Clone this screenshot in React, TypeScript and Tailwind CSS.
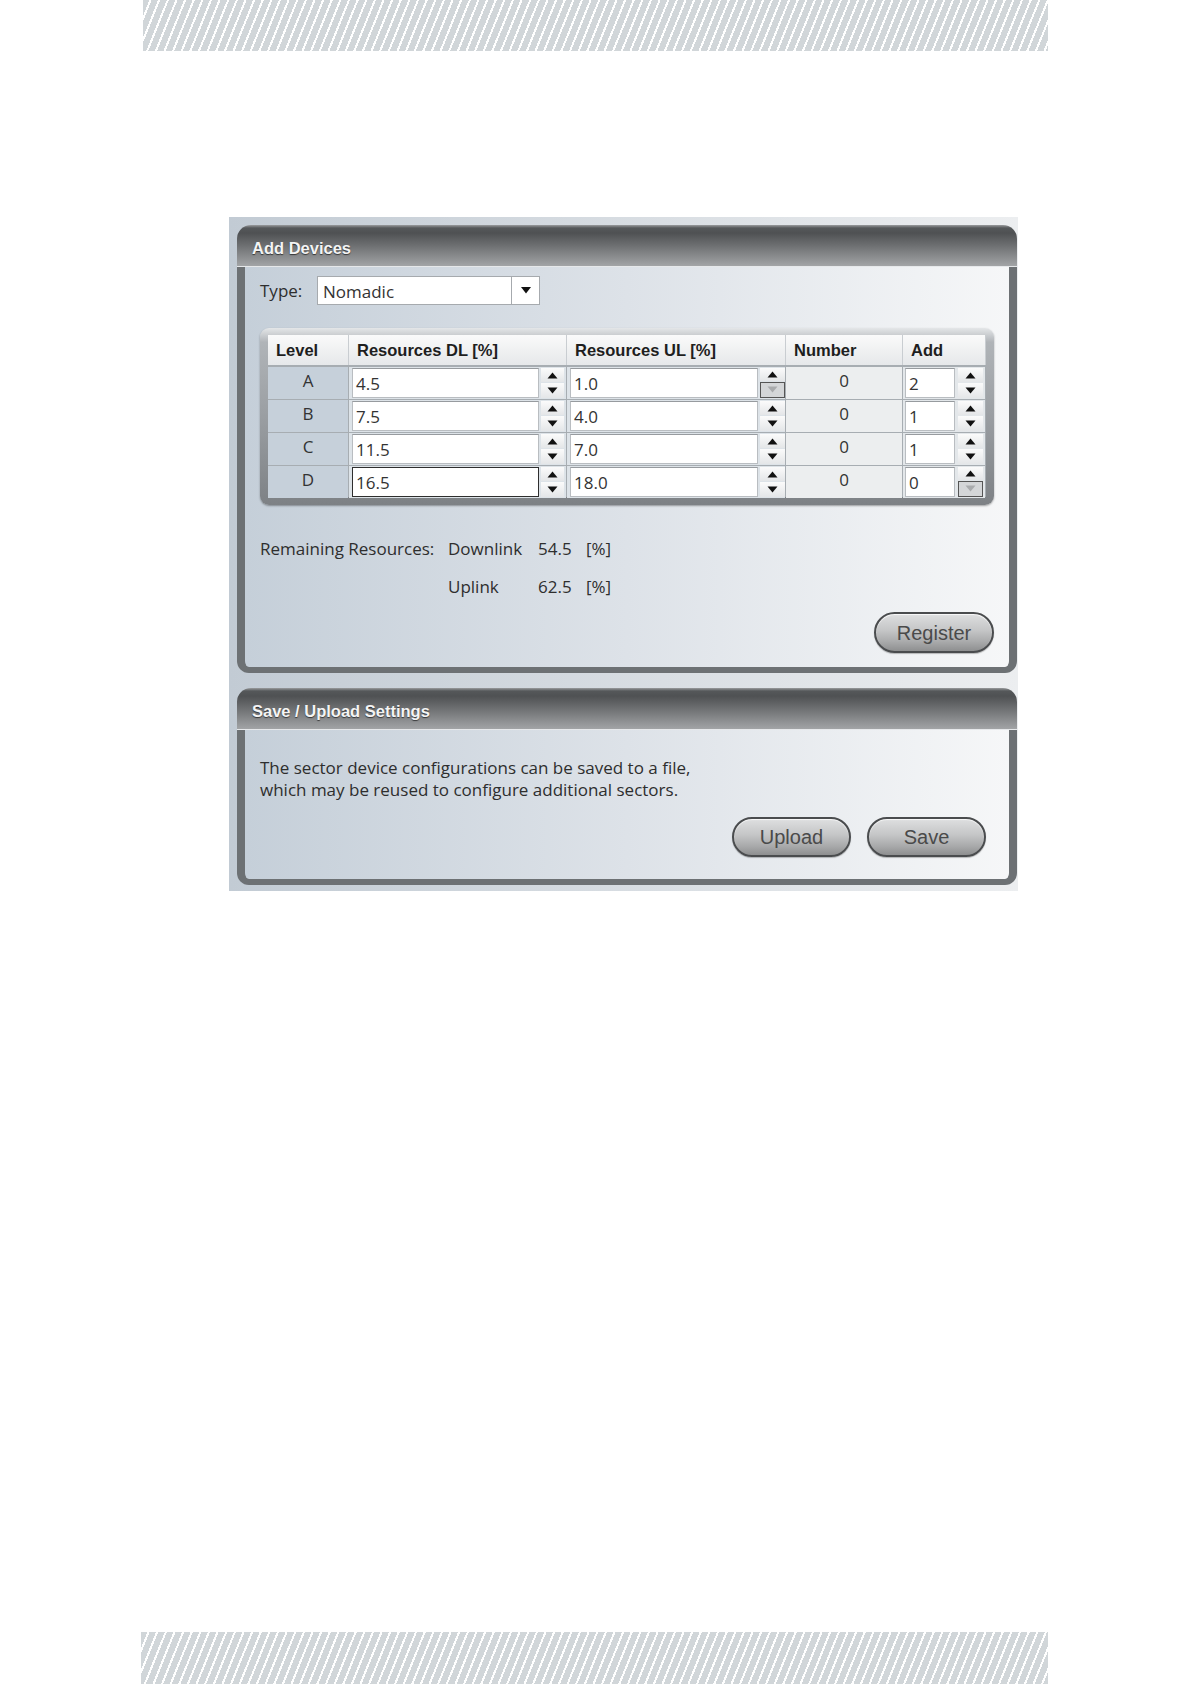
import React from "react";

const stripe =
  "bg-[image:repeating-linear-gradient(112deg,#d1d6d9_0px,#d1d6d9_6px,#ffffff_6px,#ffffff_8px)]";

function Tri({ up, color }: { up: boolean; color: string }) {
  return (
    <svg width="11" height="7" viewBox="0 0 11 7">
      {up ? (
        <polygon points="0.5,6.5 10.5,6.5 5.5,0.5" fill={color} />
      ) : (
        <polygon points="0.5,0.5 10.5,0.5 5.5,6.5" fill={color} />
      )}
    </svg>
  );
}

function Spinner({ disabledDown, w }: { disabledDown?: boolean; w: string }) {
  return (
    <div className={`flex flex-col h-full ${w} gap-[1px]`}>
      <div className="flex-1 flex items-center justify-center bg-[linear-gradient(to_bottom,#fbfbfb,#e4e6e8)]">
        <Tri up color="#111" />
      </div>
      {disabledDown ? (
        <div className="flex-1 flex items-center justify-center bg-[#d4d6d8] border border-[#555]">
          <Tri up={false} color="#a9abad" />
        </div>
      ) : (
        <div className="flex-1 flex items-center justify-center bg-[linear-gradient(to_bottom,#fbfbfb,#e4e6e8)]">
          <Tri up={false} color="#111" />
        </div>
      )}
    </div>
  );
}

function NumInput({ value, focused }: { value: string; focused?: boolean }) {
  return (
    <div
      className={`flex-1 h-full bg-white flex items-center pl-[3px] pt-[2px] text-[17px] text-[#333] ${
        focused
          ? "border-[1.5px] border-[#2e2e2e]"
          : "border border-[#b9bdc1] border-t-[#979b9f]"
      }`}
    >
      {value}
    </div>
  );
}

function Header({ title }: { title: string }) {
  return (
    <div className="h-[42px] rounded-t-[14px] bg-[linear-gradient(to_bottom,#9a9c9e_0px,#55585a_3px,#4f5153_8px,#6c6e70_20px,#a2a4a6_100%)] border-b border-[#e6e8ea] flex items-center pl-[15px] pt-[5px]">
      <span className="font-['Liberation_Sans',Arial,sans-serif] font-bold text-[16.5px] text-[#f4f4f4] [text-shadow:0_1px_1px_rgba(0,0,0,0.6)]">
        {title}
      </span>
    </div>
  );
}

function PillButton({ label, w, h }: { label: string; w: string; h: string }) {
  return (
    <div
      className={`${w} ${h} rounded-full border-2 border-[#4a4c4e] bg-[linear-gradient(to_bottom,#dedfe0,#c4c5c6_45%,#a9aaab_75%,#8e8f90)] shadow-[inset_0_1px_1px_rgba(255,255,255,0.8),0_1px_1px_rgba(0,0,0,0.25)] flex items-center justify-center font-['Liberation_Sans',Arial,sans-serif] text-[20px] text-[#4a4a4a]`}
    >
      {label}
    </div>
  );
}

const rows = [
  { lvl: "A", dl: "4.5", ul: "1.0", num: "0", add: "2", ulDis: true },
  { lvl: "B", dl: "7.5", ul: "4.0", num: "0", add: "1" },
  { lvl: "C", dl: "11.5", ul: "7.0", num: "0", add: "1" },
  { lvl: "D", dl: "16.5", ul: "18.0", num: "0", add: "0", focus: true, addDis: true },
];

const cols = "grid grid-cols-[80px_217px_218px_116px_82px]";

export default function App() {
  return (
    <div className="w-[1190px] h-[1684px] bg-white flex flex-col font-['Open_Sans',sans-serif] text-[#2e2e2e]">
      <div className={`ml-[143px] w-[905px] h-[51px] shrink-0 ${stripe}`} />

      <div className="mt-[166px] ml-[229px] w-[789px] pl-[8px] pt-[8px] pr-[1px] pb-[6px] flex flex-col gap-[15px] bg-[linear-gradient(to_right,#c2cbd4,#d9dee3_55%,#eceef0)]">
        {/* Add Devices panel */}
        <div className="w-[780px] flex flex-col">
          <Header title="Add Devices" />
          <div className="border-x-[8px] border-b-[6px] border-[#6d7174] rounded-b-[12px] bg-[linear-gradient(to_right,#c5cfd9,#dde2e8_50%,#f6f7f8)] px-[15px] pt-[9px] pb-[14px] flex flex-col">
            <div className="flex items-center h-[29px]">
              <span className="text-[17px] w-[57px]">Type:</span>
              <div className="w-[223px] h-[29px] bg-white border border-[#a6aaae] flex">
                <div className="flex-1 flex items-center pl-[5px] pt-[2px] text-[17px] text-[#333]">Nomadic</div>
                <div className="w-[28px] border-l border-[#a6aaae] flex items-center justify-center">
                  <svg width="10" height="7" viewBox="0 0 10 7">
                    <polygon points="0,0 10,0 5,6.5" fill="#111" />
                  </svg>
                </div>
              </div>
            </div>

            {/* Table */}
            <div className="mt-[23px] h-[177px] rounded-[9px] bg-[linear-gradient(to_bottom,#e4e6e8,#b0b4b8_8%,#9a9ea2_50%,#7d8185)] pt-[7px] px-[8px] pb-[8px] shadow-[0_1px_2px_rgba(0,0,0,0.35)]">
              <div className="bg-[#a7adb2] h-full flex flex-col">
                <div className={`${cols} h-[30px] gap-x-[1px] bg-[#c9cdd1]`}>
                  {["Level", "Resources DL [%]", "Resources UL [%]", "Number", "Add"].map((h) => (
                    <div
                      key={h}
                      className="bg-[linear-gradient(to_bottom,#fafafa,#e6e8ea)] flex items-center pl-[8px] font-['Liberation_Sans',Arial,sans-serif] font-bold text-[16.5px] text-[#1e1e1e]"
                    >
                      {h}
                    </div>
                  ))}
                </div>
                {rows.map((r) => (
                  <div key={r.lvl} className={`${cols} h-[31px] mt-[2px] gap-x-[1px]`}>
                    <div className="bg-[#c6d0da] flex items-center justify-center text-[17px] text-[#333] pb-[4px]">
                      {r.lvl}
                    </div>
                    <div className="bg-[#dde3e8] flex items-center gap-[2px] pl-[3px] pr-[2px] py-[1px]">
                      <NumInput value={r.dl} focused={r.focus} />
                      <Spinner w="w-[23px]" />
                    </div>
                    <div className="bg-[#dde3e8] flex items-center gap-[2px] pl-[3px] pr-[0px] py-[1px]">
                      <NumInput value={r.ul} />
                      <Spinner w="w-[25px]" disabledDown={r.ulDis} />
                    </div>
                    <div className="bg-[#eceeef] flex items-center justify-center text-[17px] text-[#333] pb-[4px]">
                      {r.num}
                    </div>
                    <div className="bg-[#e3e7ea] flex items-center gap-[3px] pl-[2px] pr-[2px] py-[1px]">
                      <NumInput value={r.add} />
                      <Spinner w="w-[25px]" disabledDown={r.addDis} />
                    </div>
                  </div>
                ))}
              </div>
            </div>

            <div className="mt-[33px] grid grid-cols-[188px_90px_48px_auto] gap-y-[16px] text-[17px] leading-[22px]">
              <span>Remaining Resources:</span>
              <span>Downlink</span>
              <span>54.5</span>
              <span>[%]</span>
              <span />
              <span>Uplink</span>
              <span>62.5</span>
              <span>[%]</span>
            </div>

            <div className="mt-[14px] flex justify-end">
              <PillButton label="Register" w="w-[120px]" h="h-[41px]" />
            </div>
          </div>
        </div>

        {/* Save / Upload panel */}
        <div className="w-[780px] flex flex-col">
          <Header title="Save / Upload Settings" />
          <div className="border-x-[8px] border-b-[6px] border-[#6d7174] rounded-b-[12px] bg-[linear-gradient(to_right,#c5cfd9,#dde2e8_50%,#f6f7f8)] pl-[15px] pr-[23px] pt-[27px] pb-[22px] flex flex-col">
            <div className="text-[17px] leading-[22px]">
              <div>The sector device configurations can be saved to a file,</div>
              <div>which may be reused to configure additional sectors.</div>
            </div>
            <div className="mt-[16px] flex justify-end gap-[16px]">
              <PillButton label="Upload" w="w-[119px]" h="h-[40px]" />
              <PillButton label="Save" w="w-[119px]" h="h-[40px]" />
            </div>
          </div>
        </div>
      </div>

      <div className={`mt-auto ml-[141px] w-[907px] h-[52px] shrink-0 ${stripe}`} />
    </div>
  );
}
